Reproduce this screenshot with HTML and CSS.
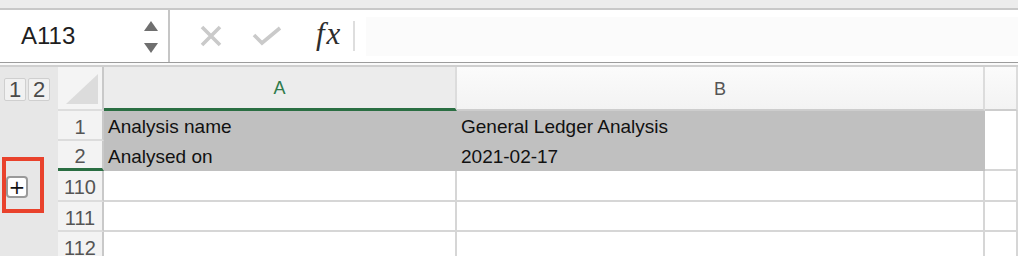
FILE: index.html
```html
<!DOCTYPE html>
<html lang="en">
<head>
<meta charset="UTF-8">
<meta name="viewport" content="width=device-width, initial-scale=1.0">
<title>Workbook</title>
<link rel="stylesheet" href="styles.css">
</head>
<body>

<div class="top-strip"></div>

<div class="formula-bar">
  <div class="name-box">
    <span class="cell-ref">A113</span>
    <div class="spinner">
      <svg width="14" height="10" viewBox="0 0 14 10"><polygon points="7,0 14,10 0,10" fill="#6f6f6f"/></svg>
      <svg width="14" height="10" viewBox="0 0 14 10"><polygon points="0,0 14,0 7,10" fill="#6f6f6f"/></svg>
    </div>
  </div>
  <div class="tools">
    <svg class="tool" width="24" height="24" viewBox="0 0 24 24">
      <path d="M3 3 L21 21 M21 3 L3 21" stroke="#cacaca" stroke-width="3.6" fill="none"/>
    </svg>
    <svg class="tool" width="30" height="20" viewBox="0 0 30 20">
      <path d="M2 9 L10 17 L28 2" stroke="#cacaca" stroke-width="3.6" fill="none"/>
    </svg>
    <span class="fx">fx</span>
    <span class="sep"></span>
  </div>
  <div class="formula-input"></div>
</div>

<div class="bar-gap"></div>

<div class="sheet">
  <div class="outline">
    <div class="levels">
      <button class="level">1</button>
      <button class="level">2</button>
    </div>
    <div class="expand-mark">
      <button class="expand">+</button>
    </div>
  </div>

  <div class="grid">
    <div class="corner">
      <svg width="32" height="30" viewBox="0 0 32 30"><polygon points="32,0 32,30 0,30" fill="#dcdcdc"/></svg>
    </div>
    <div class="col-head active">A</div>
    <div class="col-head">B</div>
    <div class="col-head"></div>

    <div class="row-head">1</div>
    <div class="cell sel">Analysis name</div>
    <div class="cell sel">General Ledger Analysis</div>
    <div class="cell side"></div>

    <div class="row-head last-sel">2</div>
    <div class="cell sel">Analysed on</div>
    <div class="cell sel">2021-02-17</div>
    <div class="cell"></div>

    <div class="row-head">110</div>
    <div class="cell"></div>
    <div class="cell"></div>
    <div class="cell"></div>

    <div class="row-head">111</div>
    <div class="cell"></div>
    <div class="cell"></div>
    <div class="cell"></div>

    <div class="row-head">112</div>
    <div class="cell"></div>
    <div class="cell"></div>
    <div class="cell"></div>
  </div>
</div>

</body>
</html>
```

FILE: styles.css
```css
* {
  box-sizing: border-box;
}

body {
  margin: 0;
  padding: 0;
  font-family: "Liberation Sans", Arial, sans-serif;
  background-color: #fff;
  overflow: hidden;
  height: 256px;
}

.top-strip {
  height: 10px;
  background-color: #ececec;
  border-bottom: 2px solid #c8c8c8;
}

.formula-bar {
  display: flex;
  height: 53px;
  background-color: #fff;
  border-bottom: 1px solid #9c9c9c;
}

.name-box {
  width: 170px;
  display: flex;
  align-items: center;
  justify-content: space-between;
  padding: 0 10px 0 21px;
  border-right: 2px solid #c6c6c6;
}

.cell-ref {
  font-size: 24px;
  color: #1e1e1e;
}

.spinner {
  display: flex;
  flex-direction: column;
  gap: 12px;
  padding-top: 2px;
}

.tools {
  display: flex;
  align-items: center;
  padding-left: 29px;
}

.tool {
  display: block;
}

.tool + .tool {
  margin-left: 29px;
}

.fx {
  font-family: "Liberation Serif", "Times New Roman", serif;
  font-style: italic;
  font-size: 31px;
  color: #2d2d2d;
  margin-left: 34px;
  letter-spacing: 2px;
  padding-bottom: 4px;
}

.sep {
  width: 2px;
  height: 30px;
  background-color: #dedede;
  margin-left: 11px;
}

.formula-input {
  flex: 1;
  margin: 7px 0 6px 11px;
  background-color: #fbfbfb;
}

.bar-gap {
  height: 4px;
  background-color: #fafafa;
  border-bottom: 2px solid #cfcfcf;
}

.sheet {
  display: flex;
}

.outline {
  width: 58px;
  background-color: #e7e7e7;
  padding-top: 11px;
  position: relative;
}

.levels {
  display: flex;
  gap: 2px;
  padding-left: 4px;
}

.level {
  width: 22px;
  height: 23px;
  padding: 0;
  border: 1px solid #cfcfcf;
  border-radius: 2px;
  background-color: #f1f1f1;
  font-family: "Liberation Sans", Arial, sans-serif;
  font-size: 22px;
  color: #4a4a4a;
  line-height: 21px;
}

.expand-mark {
  position: absolute;
  left: 2px;
  top: 90px;
  width: 42px;
  height: 56px;
  border: 4px solid #e9422c;
}

.expand {
  position: absolute;
  left: 0;
  top: 15px;
  width: 22px;
  height: 22px;
  padding: 0;
  border: 2px solid #9a9a9a;
  border-radius: 4px;
  background-color: #fff;
  font-family: "DejaVu Sans", sans-serif;
  font-size: 20px;
  line-height: 16px;
  color: #111;
}

.grid {
  flex: 1;
  display: grid;
  grid-template-columns: 46px 353px 528px 1fr;
  grid-template-rows: 44px 30px 30px 31px 30px 30px;
}

.corner {
  background-color: #f4f4f4;
  border-right: 2px solid #c9c9c9;
  border-bottom: 2px solid #dddddd;
  display: flex;
  align-items: flex-end;
  justify-content: flex-end;
  padding: 0 4px 5px 0;
}

.col-head {
  background: linear-gradient(#fbfbfb, #f3f3f3);
  border-right: 2px solid #dcdcdc;
  border-bottom: 2px solid #cdcdcd;
  display: flex;
  align-items: center;
  justify-content: center;
  font-size: 18px;
  color: #555;
  padding-top: 2px;
}

.col-head.active {
  background: #ececec;
  color: #2f7a4b;
  border-bottom: 3px solid #2a6e42;
}

.row-head {
  background-color: #f3f3f3;
  border-right: 2px solid #c9c9c9;
  border-bottom: 2px solid #dcdcdc;
  display: flex;
  align-items: center;
  justify-content: center;
  font-size: 20px;
  color: #555;
  padding-top: 4px;
}

.row-head.last-sel {
  border-bottom: 3px solid #2a6e42;
}

.cell {
  border-right: 2px solid #d6d6d6;
  border-bottom: 2px solid #d6d6d6;
  display: flex;
  align-items: center;
  padding: 4px 0 0 4px;
  font-size: 19px;
  color: #111;
  white-space: nowrap;
}

.cell.sel {
  background-color: #c0c0c0;
  border-color: #c0c0c0;
}

.cell.side {
  border-bottom: none;
}
```
